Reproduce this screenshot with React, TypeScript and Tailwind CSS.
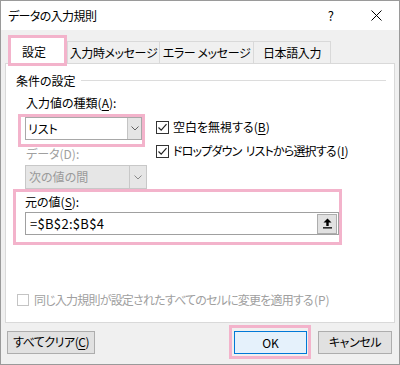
import type { ReactNode } from 'react';

function Chevron({ color = '#606060' }: { color?: string }) {
    return (
        <svg width="8" height="5" viewBox="0 0 8 5" fill="none">
            <path d="M0.5 0.5 L4 4 L7.5 0.5" stroke={color} strokeWidth="1" />
        </svg>
    );
}

function Check() {
    return (
        <svg width="11" height="11" viewBox="0 0 11 11" fill="none">
            <path d="M1.5 5.5 L4.2 8.2 L9.5 2.2" stroke="#222" strokeWidth="1.2" />
        </svg>
    );
}

function Checkbox({ checked, disabled, children }: { checked?: boolean; disabled?: boolean; children: ReactNode }) {
    return (
        <div className="flex items-center h-[24px]">
            <div
                className={
                    disabled
                        ? 'w-[12px] h-[12px] border border-[#c4c4c4] bg-white'
                        : 'w-[13px] h-[13px] border border-[#333] bg-white flex items-center justify-center'
                }
            >
                {checked && <Check />}
            </div>
            <span className={disabled ? 'ml-[5px] text-[#a0a0a0]' : 'ml-[4px]'}>{children}</span>
        </div>
    );
}

function Key({ k }: { k: string }) {
    return <span className="underline underline-offset-2">{k}</span>;
}

export default function App() {
    const tabs = [
        { label: '入力時メッセージ', w: 'w-[93px]' },
        { label: 'エラー メッセージ', w: 'w-[95px]' },
        { label: '日本語入力', w: 'w-[78px]' },
    ];

    return (
        <div className="w-[400px] h-[365px] bg-[#f0f0f0] border border-[#9a9a9a] flex flex-col overflow-hidden text-[12px] text-black font-['Noto_Sans_CJK_JP','Noto_Sans_CJK_SC',sans-serif] [font-feature-settings:'palt']">
            {/* Title bar */}
            <div className="h-[29px] bg-white flex items-center pl-[7px] pr-[17px]">
                <span className="text-[12px] tracking-[-0.6px]">データの入力規則</span>
                <span className="ml-auto text-[13px]">?</span>
                <svg className="ml-[37px]" width="11" height="11" viewBox="0 0 11 11" fill="none">
                    <path d="M0.5 0.5 L10.5 10.5 M10.5 0.5 L0.5 10.5" stroke="#000" strokeWidth="1" />
                </svg>
            </div>

            {/* Tabs */}
            <div className="mt-[5px] pl-[7px] flex items-end relative z-10">
                <div className="w-[59px] h-[31px] border-[3px] border-[#f3b3cb] bg-white flex items-center pl-[11px] pt-[3px]">
                    設定
                </div>
                {tabs.map((t, i) => (
                    <div
                        key={t.label}
                        className={`${t.w} ${i > 0 ? '-ml-px' : ''} h-[22px] mb-[3px] border border-b-0 border-[#d9d9d9] bg-[#f0f0f0] flex items-center justify-center tracking-[-0.4px]`}
                    >
                        {t.label}
                    </div>
                ))}
            </div>

            {/* Panel */}
            <div className="mx-[4px] -mt-[3px] h-[260px] bg-white border border-[#d9d9d9] flex flex-col">
                <div className="mt-[8px] pl-[10px] pr-[8px] flex items-center leading-[17px]">
                    <span>条件の設定</span>
                    <div className="ml-[5px] flex-1 h-px bg-[#dcdcdc]" />
                </div>

                <div className="flex mt-[5px]">
                    <div className="w-[141px] flex flex-col">
                        <div className="pl-[20px] leading-[17px]">
                            入力値の種類(<Key k="A" />):
                        </div>
                        <div className="ml-[12px] mt-[3px] w-[127px] h-[33px] border-[3px] border-[#f3b3cb] pl-[4px]">
                            <div className="w-[117px] h-[23px] border border-[#a8a8a8] bg-white flex">
                                <span className="flex-1 pl-[2px] leading-[21px]">リスト</span>
                                <div className="w-[14px] border-l border-[#c4c4c4] bg-[#e5e5e5] flex items-center justify-center">
                                    <Chevron />
                                </div>
                            </div>
                        </div>
                        <div className="pl-[20px] leading-[14px] text-[#a0a0a0]">データ(D):</div>
                        <div className="ml-[19px] mt-[4px] w-[122px] h-[24px] border border-[#c8c8c8] bg-[#e6e6e6] flex">
                            <span className="flex-1 pl-[3px] leading-[22px] text-[#9a9a9a]">次の値の間</span>
                            <div className="w-[17px] border-l border-[#c8c8c8] flex items-center justify-center">
                                <Chevron color="#8a8a8a" />
                            </div>
                        </div>
                    </div>
                    <div className="ml-[9px] pt-[21px] flex flex-col">
                        <Checkbox checked>
                            空白を無視する(<Key k="B" />)
                        </Checkbox>
                        <Checkbox checked>
                            <span className="tracking-[-0.8px]">ドロップダウン</span>
                            <span className="ml-[4px] tracking-[-0.8px]">リストから選択する</span>
                            <span className="ml-[1px]">
                                (<Key k="I" />)
                            </span>
                        </Checkbox>
                    </div>
                </div>

                <div className="ml-[7px] w-[329px] h-[56px] border-[3px] border-[#f3b3cb] pl-[9px]">
                    <div className="mt-[3px] leading-[14px]">
                        元の値(<Key k="S" />):
                    </div>
                    <div className="mt-[3px] w-[314px] h-[23px] border border-[#a0a0a0] bg-white flex items-center">
                        <span className="flex-1 pl-[4px] text-[13px] tracking-[0.3px]">=$B$2:$B$4</span>
                        <div className="w-[20px] h-[20px] mr-[1px] border border-[#adadad] bg-[#e1e1e1] flex items-center justify-center">
                            <svg width="11" height="11" viewBox="0 0 11 11" fill="#000">
                                <path d="M5.5 0.5 L9.5 4.5 L6.7 4.5 L6.7 8 L4.3 8 L4.3 4.5 L1.5 4.5 Z" />
                                <rect x="1" y="9.2" width="9" height="1.3" />
                            </svg>
                        </div>
                    </div>
                </div>

                <div className="mt-auto mb-[10px] ml-[11px]">
                    <Checkbox disabled>
                        <span className="tracking-[-0.8px]">同じ入力規則が設定されたすべてのセルに変更を適用する</span>
                        <span className="ml-[1px]">(P)</span>
                    </Checkbox>
                </div>
            </div>

            {/* Buttons */}
            <div className="mt-[2px] pl-[6px] pr-[7px] flex items-center">
                <div className="w-[88px] h-[23px] border border-[#adadad] bg-[#e1e1e1] flex items-center justify-center tracking-[-0.5px]">
                    すべてクリア(<Key k="C" />)
                </div>
                <div className="ml-auto w-[82px] h-[34px] border-[3px] border-[#f3b3cb] pt-[3px] pl-[2px]">
                    <div className="w-[73px] h-[23px] border border-[#0078d7] bg-[#e5f1fb] flex items-center justify-center">
                        OK
                    </div>
                </div>
                <div className="ml-[7px] w-[74px] h-[23px] border border-[#adadad] bg-[#e1e1e1] flex items-center justify-center tracking-[-0.4px]">
                    キャンセル
                </div>
            </div>
        </div>
    );
}
